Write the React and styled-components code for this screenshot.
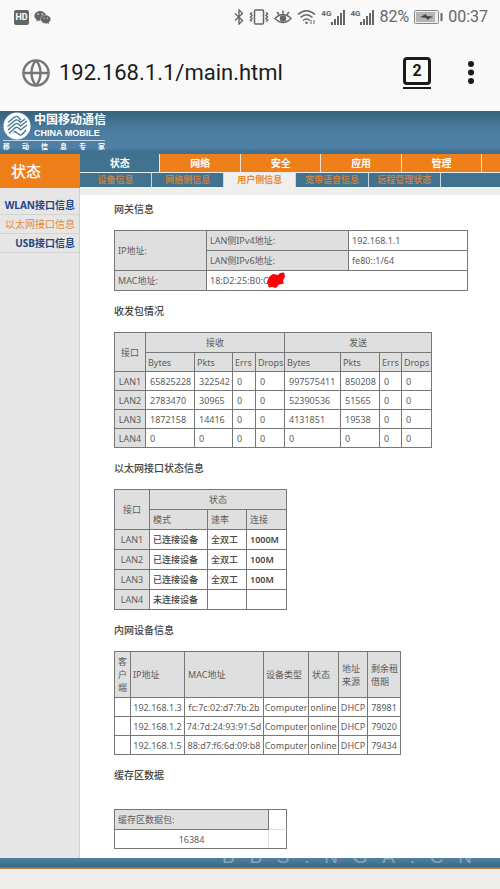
import styled, { createGlobalStyle } from "styled-components";
import { FaWeixin } from "react-icons/fa";

const MAIN_TABS = ["状态", "网络", "安全", "应用", "管理"];
const SUB_TABS = ["设备信息", "网络侧信息", "用户侧信息", "宽带语音信息", "远程管理状态"];
const SIDE_LINKS = ["WLAN接口信息", "以太网接口信息", "USB接口信息"];

const PACKETS = [
  ["LAN1", "65825228", "322542", "0", "0", "997575411", "850208", "0", "0"],
  ["LAN2", "2783470", "30965", "0", "0", "52390536", "51565", "0", "0"],
  ["LAN3", "1872158", "14416", "0", "0", "4131851", "19538", "0", "0"],
  ["LAN4", "0", "0", "0", "0", "0", "0", "0", "0"],
];

const PORTS = [
  ["LAN1", "已连接设备", "全双工", "1000M"],
  ["LAN2", "已连接设备", "全双工", "100M"],
  ["LAN3", "已连接设备", "全双工", "100M"],
  ["LAN4", "未连接设备", "", ""],
];

const DEVICES = [
  ["", "192.168.1.3", "fc:7c:02:d7:7b:2b", "Computer", "online", "DHCP", "78981"],
  ["", "192.168.1.2", "74:7d:24:93:91:5d", "Computer", "online", "DHCP", "79020"],
  ["", "192.168.1.5", "88:d7:f6:6d:09:b8", "Computer", "online", "DHCP", "79434"],
];

function Signal() {
  return (
    <SignalBox>
      <SignalType>4G</SignalType>
      <svg width="14" height="15" viewBox="0 0 14 15" fill="#666">
        <path d="M0 12h2v3H0zM3 9h2v6H3zM6 6h2v9H6zM9 3h2v12H9zM12 0h2v15h-2z" />
      </svg>
    </SignalBox>
  );
}

function StatusBar() {
  return (
    <StatusRow>
      <HdBadge>HD</HdBadge>
      <FaWeixin size={17} color="#666" />
      <StatusRight>
        <svg width="10" height="16" viewBox="0 0 10 16" fill="none" stroke="#666" strokeWidth="1.400">
          <path d="M1 4.500l7.500 7L5 15V1l3.500 3.500L1 11.500" />
        </svg>
        <svg width="20" height="16" viewBox="0 0 20 16" fill="none" stroke="#666" strokeWidth="1.500">
          <rect x="5.500" y="1" width="9" height="14" rx="1" />
          <path d="M3 3.500L1.500 5 3 6.500 1.500 8 3 9.500 1.500 11 3 12.500M17 3.500L18.500 5 17 6.500 18.500 8 17 9.500 18.500 11 17 12.500" />
        </svg>
        <svg width="18" height="16" viewBox="0 0 18 16" fill="none" stroke="#666" strokeWidth="1.500">
          <path d="M1 9.500Q9 1.500 17 9.500Q9 17.500 1 9.500zM3 3l2 2.500M9 1.500v3M15 3l-2 2.500" />
          <circle cx="9" cy="9.500" r="2.500" fill="#666" />
        </svg>
        <svg width="19" height="16" viewBox="0 0 19 16" fill="none" stroke="#666" strokeWidth="1.600">
          <path d="M1 5.500Q9.500-2 18 5.500M3.500 8.500Q9.500 3 15.500 8.500M6 11.500Q9.500 8.500 13 11.500" />
          <circle cx="9.500" cy="13.700" r="1.300" fill="#666" stroke="none" />
          <path d="M14 11v4M17 11v4" strokeWidth="1" />
        </svg>
        <Signal />
        <Signal />
        <span>82%</span>
        <svg width="29" height="14" viewBox="0 0 29 14">
          <rect x="0.500" y="0.500" width="24" height="13" rx="1" fill="#eee" stroke="#888" />
          <rect x="2" y="2" width="19" height="10" fill="#b5b5b5" />
          <path d="M6 7l6-3 .5 2 6.500.5-6 3.500-.5-2z" fill="#444" />
          <path d="M27.500 3v8" stroke="#666" strokeWidth="2" />
        </svg>
        <span>00:37</span>
      </StatusRight>
    </StatusRow>
  );
}

function AddressBar() {
  return (
    <AddressRow>
      <svg width="28" height="28" viewBox="0 0 28 28" fill="none" stroke="#757575" strokeWidth="2.400">
        <circle cx="14" cy="14" r="12.600" />
        <path d="M1 14h26M14 1.500C8 8 8 20 14 26.500M14 1.500C20 8 20 20 14 26.500" />
      </svg>
      <UrlInput aria-label="URL" defaultValue="192.168.1.1/main.html" />
      <TabsButton>
        <TabsCount>2</TabsCount>
      </TabsButton>
      <MenuButton aria-label="menu">
        <svg width="6" height="23" viewBox="0 0 6 23" fill="#1b1b1b">
          <circle cx="3" cy="3" r="3" />
          <circle cx="3" cy="11.500" r="3" />
          <circle cx="3" cy="20" r="3" />
        </svg>
      </MenuButton>
    </AddressRow>
  );
}

function Logo() {
  return (
    <LogoBox>
      <LogoTop>
        <svg width="28" height="28" viewBox="0 0 28 28" fill="none">
          <circle cx="14" cy="14" r="13.500" fill="#fff" />
          <g stroke="#477798" strokeWidth="1.400" strokeLinejoin="round">
            <path d="M5 10.500L11.500 5q2-1.500 4 .5L18 8" />
            <path d="M4.500 14.500L12 8.500q2-1.500 4 .5l1.500 1.500L22 7" />
            <path d="M5 18l7-6q2-1.500 4 .5l1.500 1.500 6.500-5" />
            <path d="M6 21.500l6-5.500q2-1.500 4 .5l1.500 1.500 6.500-5" />
            <path d="M10.500 20.500l1.500-1 4 3q1.500 1 3 0l4-4.500" />
          </g>
        </svg>
        <LogoNames>
          <LogoChinese>中国移动通信</LogoChinese>
          <LogoEnglish>CHINA MOBILE</LogoEnglish>
        </LogoNames>
      </LogoTop>
      <LogoSlogan>移动信息专家</LogoSlogan>
    </LogoBox>
  );
}

function Columns({ widths }) {
  return (
    <colgroup>
      {widths.map((w, i) => (
        <Col key={i} $w={w} />
      ))}
    </colgroup>
  );
}

function GatewayTable() {
  return (
    <DataTable>
      <Columns widths={[92, 142, 119]} />
      <tbody>
        <Row>
          <Th rowSpan={2}>IP地址:</Th>
          <Th>LAN侧IPv4地址:</Th>
          <Td>192.168.1.1</Td>
        </Row>
        <Row>
          <Th>LAN侧IPv6地址:</Th>
          <Td>fe80::1/64</Td>
        </Row>
        <Row>
          <Th>MAC地址:</Th>
          <Td colSpan={2}>
            <MacAddress>
              18:D2:25:B0:C
              <Scribble width="20" height="17" viewBox="0 0 20 17">
                <path d="M1 10l2-5 4-3 5 1 2-2 4-.5 1 4-2 4 1 3-5 1-3 3.500-4-1-3 .5z" fill="#fb0007" />
              </Scribble>
            </MacAddress>
          </Td>
        </Row>
      </tbody>
    </DataTable>
  );
}

function PacketTable() {
  return (
    <DataTable>
      <Columns widths={[31, 49, 38, 23, 29, 56, 39, 22, 30]} />
      <thead>
        <Row>
          <Th rowSpan={2} $center>接口</Th>
          <Th colSpan={4} $center>接收</Th>
          <Th colSpan={4} $center>发送</Th>
        </Row>
        <Row $h={19}>
          {["Bytes", "Pkts", "Errs", "Drops", "Bytes", "Pkts", "Errs", "Drops"].map((name, i) => (
            <Th key={i} $indent={2}>{name}</Th>
          ))}
        </Row>
      </thead>
      <tbody>
        {PACKETS.map((row) => (
          <Row key={row[0]} $h={19}>
            {row.map((cell, i) => (i === 0 ? <Th key={i} $center>{cell}</Th> : <Td key={i} $indent={4}>{cell}</Td>))}
          </Row>
        ))}
      </tbody>
    </DataTable>
  );
}

function PortTable() {
  return (
    <DataTable>
      <Columns widths={[35, 58, 39, 40]} />
      <thead>
        <Row>
          <Th rowSpan={2} $center>接口</Th>
          <Th colSpan={3} $center>状态</Th>
        </Row>
        <Row>
          <Th>模式</Th>
          <Th>速率</Th>
          <Th>连接</Th>
        </Row>
      </thead>
      <tbody>
        {PORTS.map(([port, mode, duplex, speed]) => (
          <Row key={port}>
            <Th $center>{port}</Th>
            <Td $weight={500}>{mode}</Td>
            <Td $weight={500}>{duplex}</Td>
            <Td $weight={600}>{speed}</Td>
          </Row>
        ))}
      </tbody>
    </DataTable>
  );
}

function DeviceTable() {
  return (
    <DataTable>
      <Columns widths={[16, 54, 79, 45, 30, 29, 33]} />
      <thead>
        <Row $h={46}>
          <Th $wrap>客户端</Th>
          <Th $indent={2}>IP地址</Th>
          <Th>MAC地址</Th>
          <Th $indent={2}>设备类型</Th>
          <Th>状态</Th>
          <Th $wrap>地址来源</Th>
          <Th $wrap>剩余租借期</Th>
        </Row>
      </thead>
      <tbody>
        {DEVICES.map((row) => (
          <Row key={row[1]} $h={19}>
            {row.map((cell, i) => (
              <Td key={i} $center>{cell}</Td>
            ))}
          </Row>
        ))}
      </tbody>
    </DataTable>
  );
}

function BufferTable() {
  return (
    <DataTable>
      <Columns widths={[154, 18]} />
      <tbody>
        <Row>
          <Th>缓存区数据包:</Th>
          <Td $faint="bottom" />
        </Row>
        <Row $h={19}>
          <Td $center $faint="right">16384</Td>
          <Td />
        </Row>
      </tbody>
    </DataTable>
  );
}

function App() {
  return (
    <>
      <GlobalStyle />
      <Page>
        <StatusBar />
        <AddressBar />
        <Banner>
          <Logo />
        </Banner>
        <Body>
          <Sidebar>
            <SideTitle>状态</SideTitle>
            <SideList>
              {SIDE_LINKS.map((name) => (
                <SideLink key={name} href="#" $active={name === "以太网接口信息"}>
                  {name}
                </SideLink>
              ))}
            </SideList>
          </Sidebar>
          <Main>
            <MainNav>
              {MAIN_TABS.map((name) => (
                <MainTab key={name} href="#" $active={name === "状态"}>
                  {name}
                </MainTab>
              ))}
              <MainFill />
            </MainNav>
            <SubNav>
              {SUB_TABS.map((name) => (
                <SubTab key={name} href="#" $active={name === "用户侧信息"}>
                  {name}
                </SubTab>
              ))}
              <SubFill />
            </SubNav>
            <Content>
              <Heading>网关信息</Heading>
              <GatewayTable />
              <Heading>收发包情况</Heading>
              <PacketTable />
              <Heading>以太网接口状态信息</Heading>
              <PortTable />
              <Heading>内网设备信息</Heading>
              <DeviceTable />
              <Heading $last>缓存区数据</Heading>
              <BufferTable />
            </Content>
          </Main>
        </Body>
        <Footer>
          <Watermark>
            {"BBS.NGA.CN".split("").map((c, i) => (
              <span key={i}>{c}</span>
            ))}
          </Watermark>
        </Footer>
      </Page>
    </>
  );
}

export default App;

const GlobalStyle = createGlobalStyle`
  * {
    box-sizing: border-box;
  }

  body {
    margin: 0;
    background: #eeefed;
    font-family: "Noto Sans", "Noto Sans CJK SC", sans-serif;
  }

  a {
    text-decoration: none;
  }

  button {
    padding: 0;
    border: 0;
    background: none;
  }

  svg {
    display: block;
    flex: none;
  }
`;

const Page = styled.div`
  background: #f9f9f9;
`;

// phone status bar
const StatusRow = styled.div`
  display: flex;
  align-items: center;
  gap: 5px;
  height: 34px;
  padding: 0 12px 0 14px;
  font: 16px/16px Roboto, sans-serif;
  color: #666;
`;

const HdBadge = styled.span`
  width: 15px;
  border-radius: 2px;
  background: #666;
  color: #fff;
  font-size: 9px;
  line-height: 15px;
  font-weight: 700;
  text-align: center;
`;

const StatusRight = styled.div`
  display: flex;
  align-items: center;
  gap: 5px;
  margin-left: auto;
`;

const SignalBox = styled.div`
  display: flex;
`;

const SignalType = styled.span`
  font-size: 8px;
  line-height: 8px;
  font-weight: 700;
`;

// browser address bar
const AddressRow = styled.div`
  display: flex;
  align-items: center;
  height: 77px;
  padding: 0 26px 0 22px;
`;

const UrlInput = styled.input`
  flex: 1;
  min-width: 0;
  margin-left: 9px;
  padding: 0;
  border: 0;
  outline: 0;
  background: none;
  color: #1c1c1c;
  font: 22px/28px Roboto, sans-serif;
`;

const TabsButton = styled.button`
  padding-bottom: 2px;
  border-bottom: 2px solid #1b1b1b;
`;

const TabsCount = styled.span`
  display: block;
  width: 28px;
  height: 28px;
  border: 3px solid #1b1b1b;
  border-radius: 4px;
  color: #1b1b1b;
  font: 700 16px/22px Roboto, sans-serif;
`;

const MenuButton = styled.button`
  margin-left: 37px;
`;

// router page header
const Banner = styled.header`
  height: 43px;
  padding-left: 3px;
  background: linear-gradient(#36637a, #4a7b9f 40%, #4f80a7 85%, #3f7090 95%);
`;

const LogoBox = styled.div`
  width: 102px;
`;

const LogoTop = styled.div`
  display: flex;
  gap: 3px;
  height: 30px;
  padding-top: 1px;
  border-bottom: 1px solid #c6d6e1;
`;

const LogoNames = styled.div`
  color: #fff;
  white-space: nowrap;
`;

const LogoChinese = styled.div`
  font-size: 12px;
  line-height: 16px;
  font-weight: 700;
`;

const LogoEnglish = styled.div`
  font: 700 9px/10px "Liberation Sans", sans-serif;
`;

const LogoSlogan = styled.div`
  color: #fff;
  font-size: 7px;
  line-height: 12px;
  font-weight: 700;
  text-align-last: justify;
`;

const Body = styled.div`
  display: flex;
`;

const Sidebar = styled.aside`
  width: 80px;
  background: #e6e6e6;
  border-right: 1px solid #d0d0d0;
`;

const SideTitle = styled.div`
  height: 34px;
  padding-left: 11px;
  margin-right: -1px;
  background: #ef8019;
  color: #fff;
  font-size: 15px;
  line-height: 34px;
  font-weight: 500;
`;

const SideList = styled.nav`
  padding-top: 8px;
`;

const SideLink = styled.a`
  display: block;
  height: 19px;
  padding-right: 4px;
  border-bottom: 1px solid #d4d4d4;
  color: ${(props) => (props.$active ? "#e58a3c" : "#1f4585")};
  font-size: 10px;
  line-height: 18px;
  font-weight: ${(props) => (props.$active ? 400 : 700)};
  text-align: right;
  white-space: nowrap;
`;

const Main = styled.main`
  flex: 1;
  min-width: 0;
  background: #fff;
`;

const MainNav = styled.nav`
  display: grid;
  grid-template-columns: repeat(5, 9fr) 2fr;
  column-gap: 1px;
  border-bottom: 1px solid #e9edf0;
  background: #f6e3d0;
`;

const MainTab = styled.a`
  background: ${(props) => (props.$active ? "#41728f" : "#ef8019")};
  color: #fff;
  font-size: 10px;
  line-height: 18px;
  font-weight: 700;
  text-align: center;
`;

const MainFill = styled.div`
  background: #ef8019;
`;

const SubNav = styled.nav`
  display: grid;
  grid-template-columns: repeat(5, 6fr) 5fr;
  column-gap: 1px;
  border-bottom: 8px solid #efefee;
  background: #c9d6de;
`;

const SubTab = styled.a`
  background: ${(props) => (props.$active ? "#efefee" : "#41728f")};
  color: ${(props) => (props.$active ? "#e8862e" : "#c98042")};
  font-size: 9px;
  line-height: 14px;
  font-weight: 700;
  text-align: center;
  white-space: nowrap;
`;

const SubFill = styled.div`
  background: #41728f;
`;

const Content = styled.div`
  padding: 6px 0 9px 34px;
`;

const Heading = styled.h2`
  margin: 0;
  padding: 12px 0 ${(props) => (props.$last ? 26 : 13)}px;
  color: #444;
  font-size: 10px;
  line-height: 16px;
  font-weight: 500;

  &:first-child {
    padding-top: 0;
  }
`;

// bordered tables
const DataTable = styled.table`
  width: min-content;
  border: 1px solid #777;
  border-collapse: collapse;
  table-layout: fixed;
  color: #5c5c5c;
  font-size: 9px;
  line-height: 13px;
`;

const Col = styled.col`
  width: ${(props) => props.$w}px;
`;

const Row = styled.tr`
  height: ${(props) => props.$h || 20}px;
`;

const Th = styled.th`
  padding: 0 0 0 ${(props) => (props.$center ? 0 : props.$indent || 3)}px;
  border: 1px solid #777;
  background: #dfdfdf;
  font-weight: 400;
  text-align: ${(props) => (props.$center ? "center" : "left")};
  white-space: ${(props) => (props.$wrap ? "normal" : "nowrap")};
`;

const Td = styled.td`
  padding: 0 0 0 ${(props) => (props.$center ? 0 : props.$indent || 3)}px;
  border: 1px solid #777;
  ${(props) => props.$faint && `border-${props.$faint}-color: #ddd;`}
  background: #fff;
  color: ${(props) => (props.$weight ? "#444" : "inherit")};
  font-weight: ${(props) => props.$weight || 400};
  text-align: ${(props) => (props.$center ? "center" : "left")};
  white-space: nowrap;
`;

const MacAddress = styled.span`
  position: relative;
`;

// lies over the end of the address
const Scribble = styled.svg`
  position: absolute;
  left: 56px;
  top: -2px;
`;

const Footer = styled.footer`
  position: relative;
  height: 31px;
  border-bottom: 20px solid #eeefed;
  background: linear-gradient(#4d80a3, #3b6a85 9px, #b98050 10px);
`;

// white lettering, so only the part over the blue band shows
const Watermark = styled.div`
  position: absolute;
  right: 28px;
  bottom: 3px;
  display: flex;
  justify-content: space-between;
  width: 250px;
  color: rgba(255, 255, 255, 0.35);
  font: 19px/19px "Liberation Sans", sans-serif;
`;
